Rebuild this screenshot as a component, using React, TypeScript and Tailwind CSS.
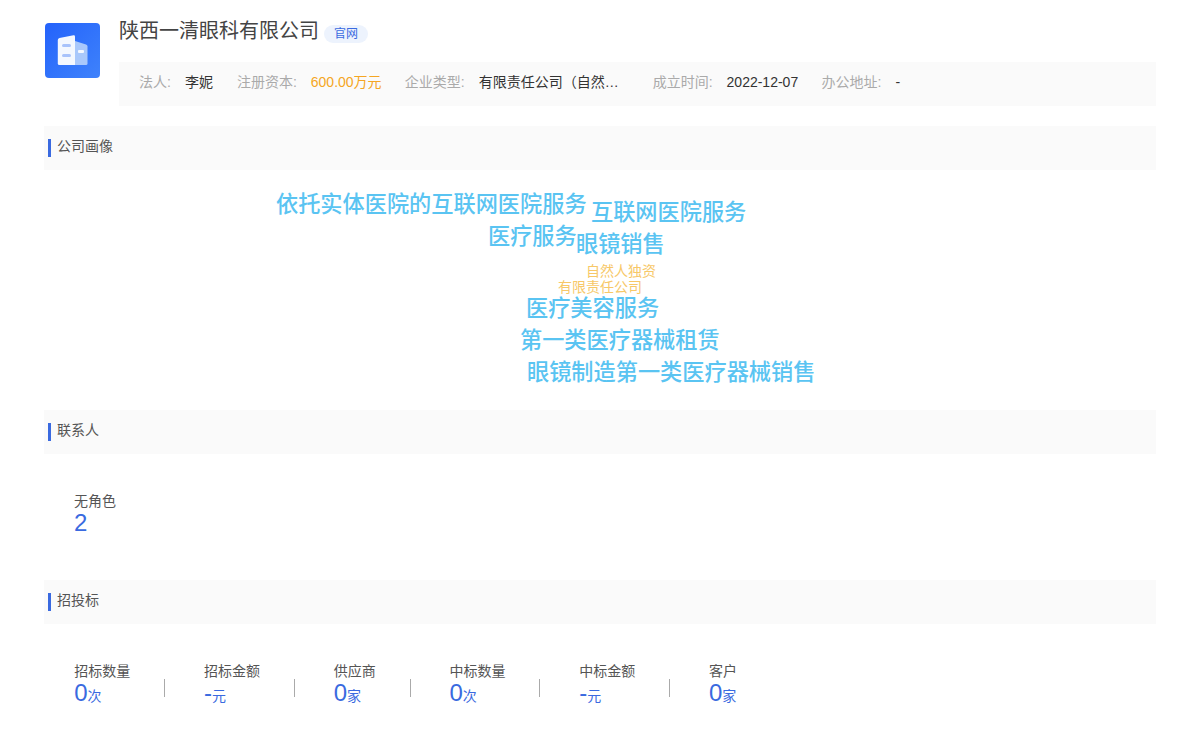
import React from 'react';

const FONT = '"Liberation Sans", "Noto Sans CJK SC", sans-serif';

const infoItems = [
    { label: '法人:', value: '李妮', cls: 'w-[28px] text-[#333]' },
    { label: '注册资本:', value: '600.00万元', cls: 'w-[70px] text-[#f5a623]' },
    { label: '企业类型:', value: '有限责任公司（自然人独资）', cls: 'w-[150px] text-[#333] truncate' },
    { label: '成立时间:', value: '2022-12-07', cls: 'w-[71px] text-[#333]' },
    { label: '办公地址:', value: '-', cls: 'w-[6px] text-[#333]' },
];

// word cloud: position is the content here
const words = [
    { text: '依托实体医院的互联网医院服务', x: 232, y: 21, big: true },
    { text: '互联网医院服务', x: 547, y: 29, big: true },
    { text: '医疗服务', x: 444, y: 53, big: true },
    { text: '眼镜销售', x: 532, y: 61, big: true },
    { text: '自然人独资', x: 542, y: 93, big: false },
    { text: '有限责任公司', x: 514, y: 109, big: false },
    { text: '医疗美容服务', x: 482, y: 125, big: true },
    { text: '第一类医疗器械租赁', x: 476, y: 157, big: true },
    { text: '眼镜制造第一类医疗器械销售', x: 483, y: 189, big: true },
];

const stats = [
    { label: '招标数量', value: '0', unit: '次' },
    { label: '招标金额', value: '-', unit: '元' },
    { label: '供应商', value: '0', unit: '家' },
    { label: '中标数量', value: '0', unit: '次' },
    { label: '中标金额', value: '-', unit: '元' },
    { label: '客户', value: '0', unit: '家' },
];

function SectionTitle({ title }: { title: string }) {
    return (
        <div className="h-[44px] bg-[#fafafa] flex items-start pl-1 pt-[13px]">
            <span className="w-[3px] h-[18px] bg-[#3a6ae0] mr-[6px]"></span>
            <span className="text-[14px] leading-[14px] text-[#555]">{title}</span>
        </div>
    );
}

function Logo() {
    return (
        <div className="w-[55px] h-[55px] ml-px rounded-[4px] bg-gradient-to-br from-[#2462fb] to-[#3f82fb] flex items-center justify-center shrink-0">
            <svg width="31" height="31" viewBox="0 0 31 31">
                <path d="M18 6 L29 9.5 Q30.5 10 30.5 11.5 V28.5 Q30.5 30 29 30 H18 Z" fill="#a9c8fb" />
                <path d="M2.5 3 L16.5 0.2 Q18 0 18 1.5 V30 H2.5 Q0.8 30 0.8 28.5 V5 Q0.8 3.4 2.5 3 Z" fill="#f4f8ff" />
                <rect x="5" y="9" width="9" height="3" rx="1.5" fill="#a9c3fb" />
                <rect x="5" y="19" width="9" height="3" rx="1.5" fill="#a9c3fb" />
                <rect x="21" y="15" width="6" height="3" rx="1" fill="#f4f8ff" />
            </svg>
        </div>
    );
}

export default function App() {
    return (
        <div className="w-[1200px] h-[752px] bg-white px-[44px] overflow-hidden" style={{ fontFamily: FONT }}>
            {/* Header */}
            <div className="flex pt-[23px] h-[126px]">
                <Logo />
                <div className="ml-[19px] flex-1 -mt-[23px]">
                    <div className="flex items-start pt-[19px] h-[62px]">
                        <h1 className="text-[20px] leading-[24px] text-[#444] font-normal">陕西一清眼科有限公司</h1>
                        <span className="ml-[5px] mt-[6px] h-[18px] w-[44px] rounded-full bg-[#edf3fd] text-[#3a6ae0] text-[12px] leading-[18px] text-center">官网</span>
                    </div>
                    <div className="h-[44px] bg-[#fafafa] flex items-start pt-[10px] pl-[20px] text-[14px] leading-[20px]">
                        {infoItems.map((item) => (
                            <div key={item.label} className="flex mr-[24px]">
                                <span className="text-[#aaa] mr-[14px] whitespace-nowrap">{item.label}</span>
                                <span className={`${item.cls} whitespace-nowrap`}>{item.value}</span>
                            </div>
                        ))}
                    </div>
                </div>
            </div>

            <SectionTitle title="公司画像" />
            <div className="relative h-[240px]">
                {words.map((w) => (
                    <span
                        key={w.text}
                        className={
                            w.big
                                ? 'absolute whitespace-nowrap text-[22.2px] leading-[28px] font-medium text-[#5ac4f2]'
                                : 'absolute whitespace-nowrap text-[14px] leading-[16px] text-[#f7c868]'
                        }
                        style={{ left: w.x, top: w.y }}
                    >
                        {w.text}
                    </span>
                ))}
            </div>

            <SectionTitle title="联系人" />
            <div className="h-[126px] pl-[30px] pt-[38px]">
                <div className="text-[14px] leading-[18px] text-[#555]">无角色</div>
                <div className="text-[24px] leading-[26px] text-[#3a6ae0]">2</div>
            </div>

            <SectionTitle title="招投标" />
            <div className="flex pl-[30.2px] pt-[38px]">
                {stats.map((s, i) => (
                    <div key={s.label} className="flex items-end">
                        <div>
                            <div className="text-[14px] leading-[18px] text-[#555] whitespace-nowrap">{s.label}</div>
                            <div className="leading-[26px] text-[#3a6ae0] whitespace-nowrap h-[26px]">
                                <span className="text-[24px]">{s.value}</span>
                                <span className="text-[14px]">{s.unit}</span>
                            </div>
                        </div>
                        {i < stats.length - 1 && <span className="w-px h-[18px] bg-[#aaa] ml-[34px] mr-[38.75px] mb-[9px]"></span>}
                    </div>
                ))}
            </div>
        </div>
    );
}
